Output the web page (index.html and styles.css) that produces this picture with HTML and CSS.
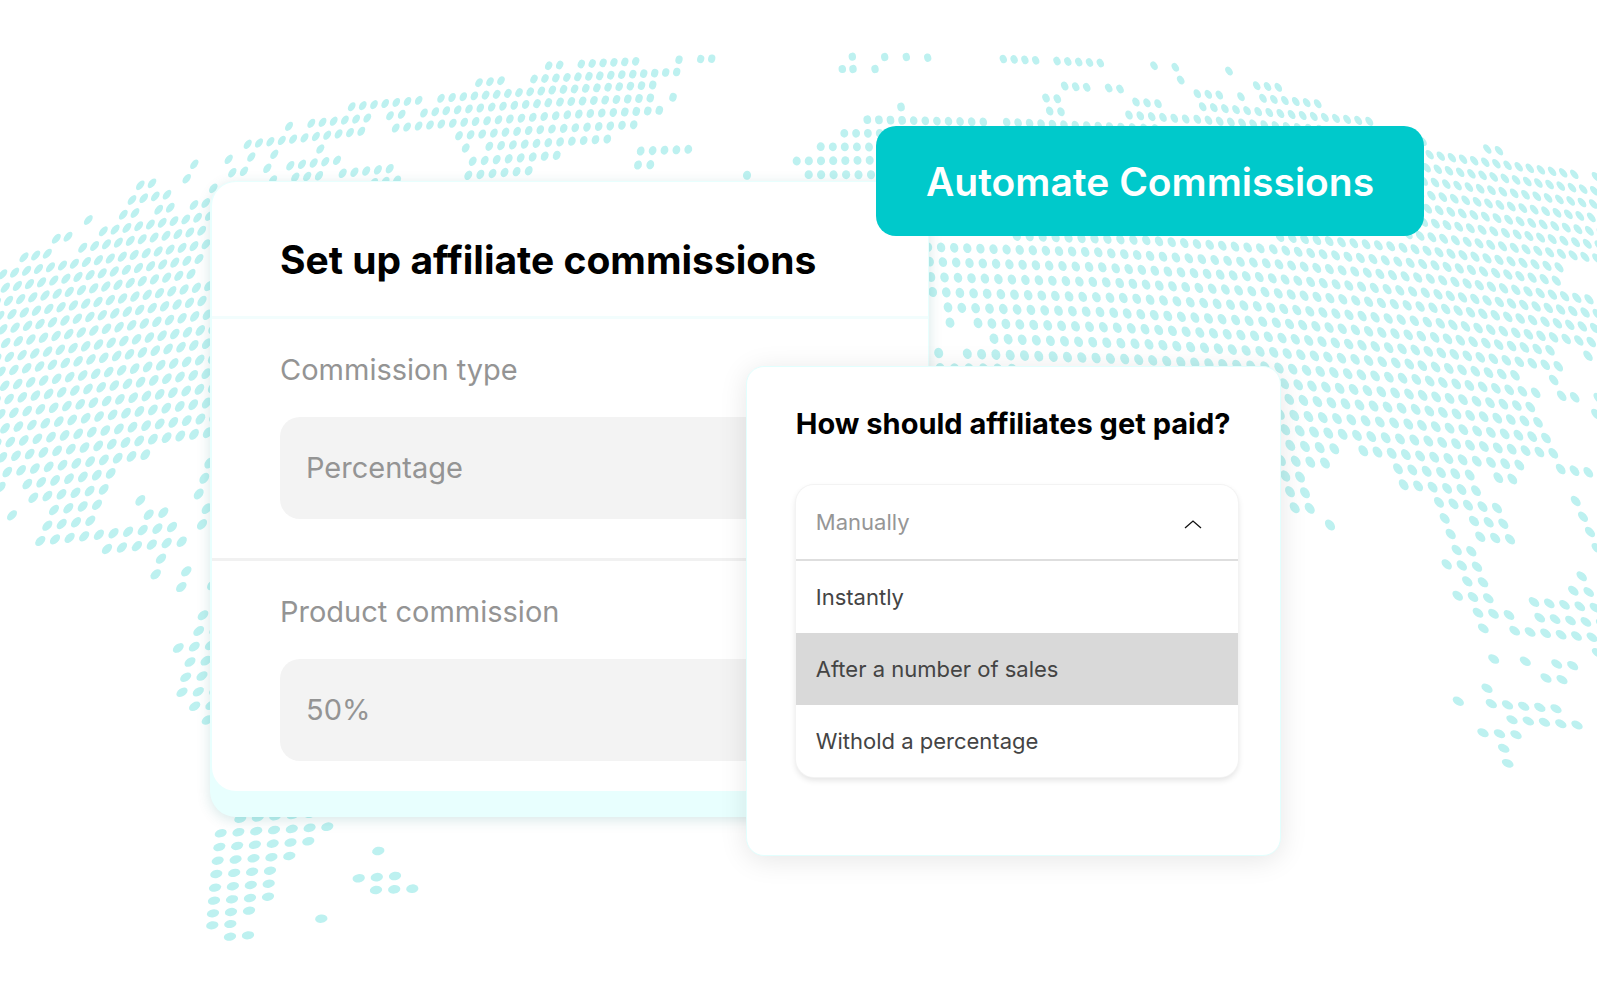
FILE: index.html
```html
<!DOCTYPE html>
<html lang="en">
<head>
<meta charset="utf-8">
<meta name="viewport" content="width=device-width, initial-scale=1">
<title>Set up affiliate commissions</title>
<link rel="stylesheet" href="styles.css">
</head>
<body>
<main class="scene">
  <svg class="world-map" id="world-map" viewBox="0 0 1597 994" aria-hidden="true"></svg>

  <form class="setup-card">
    <div class="setup-panel">
      <header class="setup-header">
        <h1 class="setup-title">Set up affiliate commissions</h1>
      </header>
      <div class="field">
        <label class="field-label" for="commission-type">Commission type</label>
        <input class="field-input" id="commission-type" type="text" value="Percentage">
      </div>
      <div class="field">
        <label class="field-label" for="product-commission">Product commission</label>
        <input class="field-input" id="product-commission" type="text" value="50%">
      </div>
    </div>
  </form>

  <section class="payout-card">
    <h2 class="payout-title" id="payout-title">How should affiliates get paid?</h2>
    <div class="dropdown">
      <button class="dropdown-toggle" type="button" aria-expanded="true" aria-controls="payout-options">
        <span>Manually</span>
        <svg class="chevron" viewBox="0 0 18 9" aria-hidden="true"><path d="M1 8 L9 1 L17 8"/></svg>
      </button>
      <ul class="dropdown-list" id="payout-options" aria-labelledby="payout-title">
        <li><button class="option" type="button">Instantly</button></li>
        <li><button class="option option-active" type="button">After a number of sales</button></li>
        <li><button class="option" type="button">Withold a percentage</button></li>
      </ul>
    </div>
  </section>

  <button class="automate" type="button">Automate Commissions</button>
</main>
<script src="map.js"></script>
</body>
</html>
```

FILE: styles.css
```css
* {
  box-sizing: border-box;
}

body {
  margin: 0;
  background: #fff;
  font-family: Inter, "Liberation Sans", sans-serif;
}

h1, h2, ul {
  margin: 0;
  padding: 0;
}

button, input {
  border: 0;
  font: inherit;
}

.scene {
  position: relative;
  min-height: 100vh;
  padding-top: 181px;
  overflow: hidden;
}

.world-map {
  position: absolute;
  top: 0;
  left: 0;
  width: 100%;
  fill: #bdf1f0;
}

/* Commission set-up card */
.setup-card {
  position: relative;
  width: 45.05%;
  margin-left: 13.15%;
  padding: 1px 1px 26px 2px;
  border-radius: 26px;
  background: #e8fffe;
  box-shadow: 0 3px 14px rgba(0, 110, 110, 0.16);
}

.setup-panel {
  border-radius: 24px;
  background: #fff;
}

.setup-header {
  padding: 54px 68px 32px;
  border-bottom: 3px solid #f2fdfd;
}

.setup-title {
  font-size: 39px;
  line-height: 48px;
  font-weight: 700;
  color: #000;
  white-space: nowrap;
}

.field {
  display: flex;
  flex-direction: column;
  gap: 29px;
  padding: 33px 68px 30px;
}

.field:not(:last-child) {
  padding-bottom: 39px;
  border-bottom: 3px solid #f1f1f1;
}

.field-label {
  font-size: 29px;
  line-height: 36px;
  color: #949494;
}

.field-input {
  width: 100%;
  height: 102px;
  padding: 0 26px 2px;
  border-radius: 20px;
  background: #f3f3f3;
  font-size: 29px;
  color: #949494;
}

/* Payout card with the open drop-down */
.payout-card {
  position: absolute;
  top: 366px;
  left: 46.7%;
  width: 33.5%;
  padding: 39px 42px 78px 49px;
  border: 1px solid #e2fffe;
  border-radius: 18px;
  background: #fff;
  box-shadow: 0 4px 28px rgba(0, 0, 0, 0.1);
}

.payout-title {
  font-size: 29px;
  line-height: 36px;
  font-weight: 700;
  color: #000;
  white-space: nowrap;
}

.dropdown {
  margin-top: 43px;
  border-radius: 18px;
  background: #fff;
  box-shadow: 0 0 0 1px #f3f3f3, 0 3px 6px rgba(0, 0, 0, 0.12);
}

.dropdown-toggle {
  display: flex;
  align-items: center;
  justify-content: space-between;
  width: 100%;
  height: 76px;
  padding: 0 36px 0 20px;
  border-bottom: 2px solid #dedede;
  background: none;
  font-size: 22px;
  color: #969696;
}

.chevron {
  width: 18px;
  height: 9px;
  margin-top: 5px;
  fill: none;
  stroke: #111;
  stroke-width: 1.3;
}

.dropdown-list {
  list-style: none;
}

.option {
  display: block;
  width: 100%;
  height: 72px;
  padding: 0 20px;
  background: none;
  font-size: 22px;
  text-align: left;
  color: #444;
}

.option-active {
  background: #d9d9d9;
}

/* Call to action */
.automate {
  position: absolute;
  top: 126px;
  left: 54.85%;
  height: 110px;
  padding: 0 50px;
  border-radius: 20px;
  background: #00c9cb;
  font-size: 39px;
  font-weight: 600;
  color: #fff;
  white-space: nowrap;
}
```

FILE: map.js
```js
// Dotted world map. Each patch has an origin in map units; its runs are
// [x, y] for one dot or [x0, y0, x1, y1, count] for an evenly spaced row,
// in thirds of a map unit from that origin.
const patches = [
  { x: 0, y: 140, runs: [
    [583,73],[560,116],[265,240],[421,136,456,130,2],[396,180,501,164,4],
    [370,224,405,219,2],[476,209,511,203,2],[582,195,617,189,2],[640,145],
    [310,274,628,228,10],[169,296,204,290,2],[248,323,605,272,11],
    [72,352,142,341,3],[8,403,618,313,18],[16,443,597,357,17],
    [-11,488,573,402,17],[-1,528,626,438,18],[8,568,606,483,17],
    [17,609,622,524,17],[-10,656,639,566,18],[3,695,620,611,17],
    [14,737,638,655,17],[-12,782,619,701,17],[2,823,638,743,17],
    [15,865,620,789,16],[-10,911,642,832,17],[7,952,623,878,16],
    [22,996,436,944,11],[628,969],[2,1041],[82,1032,332,1000,7],[613,1015],
    [100,1073,311,1048,6],[596,1062],[36,1126],[162,1110,291,1094,4],
    [421,1081],[620,1106],[142,1157,271,1142,4],[446,1124,490,1118,2],
    [606,1153],[121,1203,516,1161,10],[321,1227,545,1205,6],[483,1256]
  ]},
  { x: 130, y: 40, runs: [
    [477,259],[544,250,712,234,6],[353,313,694,274,11],[296,358],[364,351],
    [433,343],[571,327],[307,398,342,394,2],[412,385],[481,377,621,361,5],
    [429,420],[496,412,567,407,3],[638,400,779,386,5],[732,428,801,421,3],
    [665,200,866,181,7],[780,227,815,223,2],[882,219,916,215,2],
    [797,264,900,255,4]
  ]},
  { x: 440, y: 40, runs: [
    [117,128,183,122,3],[326,77,359,75,2],[424,72,587,64,6],[717,59],
    [782,57,815,56,2],[282,117,710,96,14],[3,175,304,153,10],
    [337,150,638,135,10],[19,212,325,188,10],[360,186,631,174,9],
    [699,172],[4,252,347,227,11],[382,224,658,211,9],[57,287,301,269,8],
    [336,267,581,254,8],[77,324],[148,319,502,297,11],[98,364,350,346,8],
    [85,406,266,392,6],[602,333,745,328,5],[594,375,631,374,2],[921,406]
  ]},
  { x: 780, y: 40, runs: [
    [217,50],[314,51],[379,51],[443,53],[187,87,219,87,2],[285,87],
    [670,57,767,61,4],[831,63,961,69,5],[854,138,920,142,3],
    [798,174,832,176,2],[809,213,843,215,2],[363,201],
    [262,239,610,246,11],[680,247,1127,266,14],[193,280,299,280,4],
    [122,320,267,321,5],[50,363,269,361,7],[86,404,273,404,6]
  ]},
  { x: 1060, y: 40, runs: [
    [146,144,180,147,2],[282,77],[346,82],[362,120],[507,93],
    [228,186,294,191,3],[207,225,377,237,6],[412,238,781,268,12],
    [412,161,478,165,3],[543,170],[428,200,928,244,16],[590,137,655,142,3],
    [609,175,773,191,6]
  ]},
  { x: 1380, y: 110, runs: [
    [128,94],[149,134,583,193,14],[322,117,357,122,2],[648,200],
    [140,173,643,242,16],[131,213,640,282,16],[120,252,668,327,17],
    [143,296,663,367,16],[131,336,657,406,16],[85,373,650,445,17]
  ]},
  { x: 920, y: 225, runs: [
    [290,33,679,46,11],[717,49,1021,70,9],[24,66,535,82,14],
    [574,85,1039,115,13],[29,110,547,127,14],[587,130,1018,156,12],
    [33,156,559,172,14],[599,174,1035,201,12],[38,201,570,218,14],
    [610,219,1012,244,11],[84,247,540,261,12],[581,263,1028,290,12],
    [90,293],[174,294,592,308,11],[634,310,1045,335,11],
    [222,341,645,356,11],[687,358,1020,379,9],[56,384],
    [142,386,614,402,12],[656,404,1035,425,10],[61,430,277,432,6]
  ]},
  { x: 1270, y: 225, runs: [
    [30,36,362,64,10],[399,68,867,127,14],[10,73,458,117,13],
    [495,121,859,167,11],[27,118,481,161,13],[518,166,957,223,13],
    [7,160,466,203,13],[504,208,982,267,14],[25,205,489,248,13],
    [527,252,974,309,13],[2,248,472,291,13],[511,295,964,351,13],
    [19,293,454,333,12],[494,337,840,376,10],[954,392],
    [36,339,436,375,11],[475,379,865,424,11],[11,382,418,417,11],
    [457,422,735,451,8],[851,465],[27,429,439,463,11],[479,468,797,503,9],
    [875,512,914,517,2],[43,476,417,507,10],[458,511,781,546,9],[985,519],
    [58,523,437,553,10],[478,558,804,592,9],[978,567],[30,568,415,597,10],
    [456,601,828,639,10],[46,614,433,645,10],[475,648,850,685,10],
    [61,661,193,671,4],[280,677,748,720,12],[872,732,955,742,3],
    [33,706,165,714,4],[384,731,599,750,6],[685,758,727,762,2],
    [46,753,90,756,2],[401,779,618,797,6],[917,828],[60,800,105,803,2],
    [507,832,681,849,5],[939,875],[74,848,119,850,2],[524,880],
    [612,888,700,896,3],[960,921],[180,900]
  ]},
  { x: 1410, y: 500, runs: [
    [122,102],[211,110,300,118,3],[560,144],[140,150,184,154,2],
    [110,193,201,200,3],[172,244,219,247,2],[143,287,235,295,3],
    [204,338,297,345,3],[220,385],[314,392,546,412,6],[515,229],
    [490,272,536,276,2],[372,306,555,323,5],[389,353,574,370,5],[562,458],
    [251,477],[346,484],[440,492,488,497,2],[408,534,456,539,2],[231,565],
    [145,604],[244,611,438,626,5],[306,659,501,675,5],[219,698,318,704,3],
    [281,745],[293,790]
  ]},
  { x: 130, y: 540, runs: [
    [77,103],[169,94],[154,141],[247,135],[219,226],[206,273],[254,271],
    [145,324,241,316,3],[180,366,228,362,2],[167,412,216,408,2],
    [156,457,254,453,3],[194,499,243,496,2],[232,540],[331,836,540,821,5],
    [272,880,592,860,7],[268,921,535,904,6],[263,962,478,948,5],
    [259,1002,420,992,4],[255,1043,416,1031,4],[252,1082,414,1070,4],
    [249,1120,357,1112,3],[247,1156,301,1152,2],[300,1190,354,1186,2],
    [745,933],[686,1015,795,1008,3],[738,1050,847,1046,3],[574,1136]
  ]}
];

const AXIS = 810;

// Dots lean away from the central axis and lie flatter towards the south.
function tilt(x, y) {
  if (y > 800) return 72 + (y - 833) * 0.085 + (x - 210) * 0.03;
  const lean = 43 * (1 - Math.exp(-Math.abs(x - AXIS) / 280));
  return lean + Math.max(0, y - 480) * 0.085;
}

function addDot(svg, x, y) {
  const side = Math.abs(x - AXIS);
  const depth = Math.min(y, 450);
  const dot = document.createElementNS("http://www.w3.org/2000/svg", "ellipse");
  const angle = tilt(x, y) * (x < AXIS ? 1 : -1);
  dot.setAttribute("rx", Math.max(2.9, 3.6 + depth * 0.003 - side * 0.0016).toFixed(2));
  dot.setAttribute("ry", Math.min(6.2, 3.8 + depth * 0.0035 + Math.min(1.3, side * 0.0019)).toFixed(2));
  dot.setAttribute("transform", `translate(${x.toFixed(1)} ${y.toFixed(1)}) rotate(${angle.toFixed(1)})`);
  svg.appendChild(dot);
}

const map = document.getElementById("world-map");
for (const patch of patches) {
  for (const [x0, y0, x1 = x0, y1 = y0, count = 1] of patch.runs) {
    for (let i = 0; i < count; i++) {
      const t = count > 1 ? i / (count - 1) : 0;
      addDot(map, patch.x + (x0 + (x1 - x0) * t) / 3, patch.y + (y0 + (y1 - y0) * t) / 3);
    }
  }
}
```
